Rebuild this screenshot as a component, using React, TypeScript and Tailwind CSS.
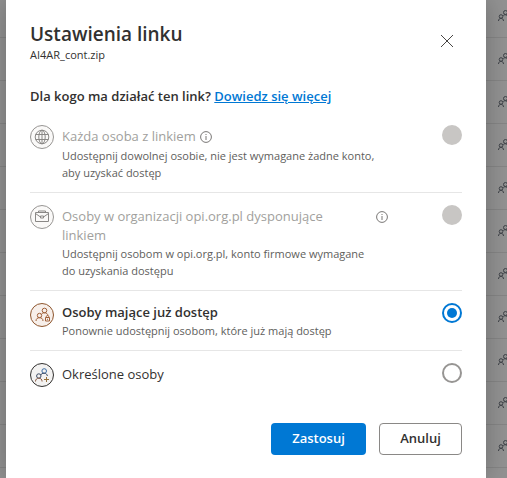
import { useState } from 'react';
import type { ReactNode } from 'react';

interface LinkOption {
  id: string;
  title: string;
  description?: string;
  disabled?: boolean;
  info?: 'inline' | 'end';
  icon: ReactNode;
}

const GlobeIcon = () => (
  <svg viewBox="0 0 24 24" className="size-6" fill="none" stroke="#8a8886" strokeWidth="1">
    <circle cx="12" cy="12" r="11.5" fill="#faf9f8" stroke="#979593" />
    <circle cx="12" cy="12" r="6.8" />
    <ellipse cx="12" cy="12" rx="3.2" ry="6.8" />
    <path d="M5.5 9.5h13M5.5 14.5h13M12 5v14" />
  </svg>
);

const BriefcaseIcon = () => (
  <svg viewBox="0 0 24 24" className="size-6" fill="none" stroke="#8a8886" strokeWidth="1">
    <circle cx="12" cy="12" r="11.5" fill="#faf9f8" stroke="#979593" />
    <path d="M5.5 7.5h13v9h-13zM8.5 7.5v-1.500h7v1.500" />
    <path d="M5.5 8.5l5 3.500M18.5 8.5l-5 3.500M10.5 11h3v2h-3z" />
  </svg>
);

const PeopleLockIcon = () => (
  <svg viewBox="0 0 24 24" className="size-6" fill="none" stroke="#a0613a" strokeWidth="1">
    <circle cx="12" cy="12" r="11.5" fill="#f7efea" stroke="#8e562e" />
    <circle cx="14.5" cy="7.5" r="2.3" />
    <path d="M11.3 11.5c.6-1.1 1.7-1.7 3.2-1.7 1.9 0 3.1 1 3.5 2.7" />
    <circle cx="9.5" cy="12.5" r="2.2" />
    <path d="M6 18c.1-2.3 1.4-3.3 3.5-3.3s3.4 1 3.5 3.3" />
    <path d="M15.5 14.5h4v3.5h-4zM16.3 14.5v-1c0-1.3 2.4-1.3 2.4 0v1M17 16.3h1" />
  </svg>
);

const PeopleAddIcon = () => (
  <svg viewBox="0 0 24 24" className="size-6" fill="none" stroke="#3b4a63" strokeWidth="1">
    <circle cx="12" cy="12" r="11.5" fill="#f3f2f1" stroke="#323130" />
    <circle cx="14.2" cy="8" r="2.3" stroke="#3c6ea5" />
    <path d="M10.8 12c.5-1.2 1.7-1.8 3.4-1.8 1.8 0 2.8 1 3.2 2.8" />
    <circle cx="8.8" cy="13" r="2.2" />
    <path d="M5.5 18.5c.1-2.2 1.3-3.3 3.3-3.3s3.2 1.1 3.3 3.3" stroke="#8a5a44" />
    <path d="M16.5 14v5M14 16.5h5" stroke="#96703a" />
  </svg>
);

const InfoIcon = () => (
  <svg viewBox="0 0 12 12" className="size-3" fill="none" stroke="#797775" strokeWidth="1">
    <circle cx="6" cy="6" r="5.4" />
    <path d="M6 5v4M6 3v1" />
  </svg>
);

const SharedIcon = () => (
  <svg viewBox="0 0 16 16" className="size-4 shrink-0" fill="none" stroke="#3f4248" strokeWidth="1">
    <circle cx="7.5" cy="4.5" r="2" />
    <path d="M5 7.8c1.2-1.6 4.2-1.4 5 1" />
    <circle cx="3" cy="8.5" r="1.8" />
    <path d="M.5 13c0-3.6 5-3.6 5 0" />
  </svg>
);

const options: LinkOption[] = [
  {
    id: 'anyone',
    title: 'Każda osoba z linkiem',
    description: 'Udostępnij dowolnej osobie, nie jest wymagane żadne konto, aby uzyskać dostęp',
    disabled: true,
    info: 'inline',
    icon: <GlobeIcon />,
  },
  {
    id: 'organization',
    title: 'Osoby w organizacji opi.org.pl dysponujące\nlinkiem',
    description: 'Udostępnij osobom w opi.org.pl, konto firmowe wymagane do uzyskania dostępu',
    disabled: true,
    info: 'end',
    icon: <BriefcaseIcon />,
  },
  {
    id: 'existing',
    title: 'Osoby mające już dostęp',
    description: 'Ponownie udostępnij osobom, które już mają dostęp',
    icon: <PeopleLockIcon />,
  },
  { id: 'specific', title: 'Określone osoby', icon: <PeopleAddIcon /> },
];

const rows = Array.from({ length: 12 }, (_, i) => i);

// Dimmed file list behind the dialog
const FileList = () => (
  <div className="absolute inset-0 overflow-hidden bg-[#929292]" aria-hidden="true">
    <div className="-mt-[5px]">
      {rows.map((row) => (
        <div key={row} className="flex h-[43px] items-center justify-end border-b border-[#858585]">
          <div className="-mr-[7px]">
            <SharedIcon />
          </div>
        </div>
      ))}
    </div>
  </div>
);

interface OptionRowProps {
  option: LinkOption;
  checked: boolean;
  onSelect: (id: string) => void;
}

const OptionRow = ({ option, checked, onSelect }: OptionRowProps) => {
  const titleColor = option.disabled
    ? 'text-[#a19f9d]'
    : checked
      ? 'font-semibold text-[#323130]'
      : 'text-[#323130]';

  return (
    <li className="flex items-start border-b border-[#e6e6e6] pt-3 pb-[11px] last:border-b-0">
      <div className="mr-2 shrink-0">{option.icon}</div>
      <div className={`w-[330px] min-w-0 ${option.disabled || !option.description ? 'pt-[2px]' : ''}`}>
        <div className="flex items-start">
          <label htmlFor={option.id} className={`text-[13px] leading-[19px] whitespace-pre-line ${titleColor}`}>
            {option.title}
          </label>
          {option.info && (
            <button
              type="button"
              aria-label="Informacje"
              className={`flex size-5 shrink-0 items-center justify-center ${option.info === 'end' ? 'ml-auto' : ''}`}
            >
              <InfoIcon />
            </button>
          )}
        </div>
        {option.description && (
          <p className="max-w-[314px] text-[11px] leading-[17px] text-[#605e5c]">{option.description}</p>
        )}
      </div>
      <input
        type="radio"
        id={option.id}
        name="link-scope"
        checked={checked}
        disabled={option.disabled}
        onChange={() => onSelect(option.id)}
        className="ml-auto flex size-5 shrink-0 appearance-none items-center justify-center rounded-full border-2 border-[#979593] bg-white checked:border-[#0078d4] checked:before:size-[10px] checked:before:rounded-full checked:before:bg-[#0078d4] disabled:border-[#c8c6c4] disabled:bg-[#c8c6c4]"
      />
    </li>
  );
};

export default function App() {
  const [selected, setSelected] = useState('existing');

  return (
    <div className="relative min-h-screen overflow-hidden pr-[21px] pl-[6px] font-['Open_Sans',sans-serif]">
      <FileList />
      <div
        role="dialog"
        aria-labelledby="dialog-title"
        className="relative mx-auto flex min-h-screen flex-col bg-white px-6 pt-5 pb-[23px] shadow-[0_0_24px_rgba(0,0,0,0.25)]"
      >
        <header className="flex items-start justify-between">
          <div>
            <h1 id="dialog-title" className="text-[19px] leading-7 font-semibold text-[#323130]">
              Ustawienia linku
            </h1>
            <p className="text-[11px] leading-[14px] text-[#323130]">AI4AR_cont.zip</p>
          </div>
          <button type="button" aria-label="Zamknij" className="-mr-px mt-[5px] flex size-8 items-center justify-center">
            <svg viewBox="0 0 12 12" className="size-3" fill="none" stroke="#484644" strokeWidth="1">
              <path d="M0 0l12 12M12 0L0 12" />
            </svg>
          </button>
        </header>

        <p className="mt-6 text-[13px] leading-5 font-semibold text-[#323130]">
          Dla kogo ma działać ten link?{' '}
          <a href="#" className="text-[#0078d4] underline">
            Dowiedz się więcej
          </a>
        </p>

        <ul className="mt-[7px]">
          {options.map((option) => (
            <OptionRow key={option.id} option={option} checked={selected === option.id} onSelect={setSelected} />
          ))}
        </ul>

        <div className="mt-[25px] flex justify-end gap-[13px]">
          <button type="button" className="h-8 w-[95px] rounded-sm bg-[#0078d4] text-[13px] font-semibold text-white">
            Zastosuj
          </button>
          <button
            type="button"
            className="h-8 w-[83px] rounded-sm border border-[#8a8886] bg-white text-[13px] font-semibold text-[#323130]"
          >
            Anuluj
          </button>
        </div>
      </div>
    </div>
  );
}
